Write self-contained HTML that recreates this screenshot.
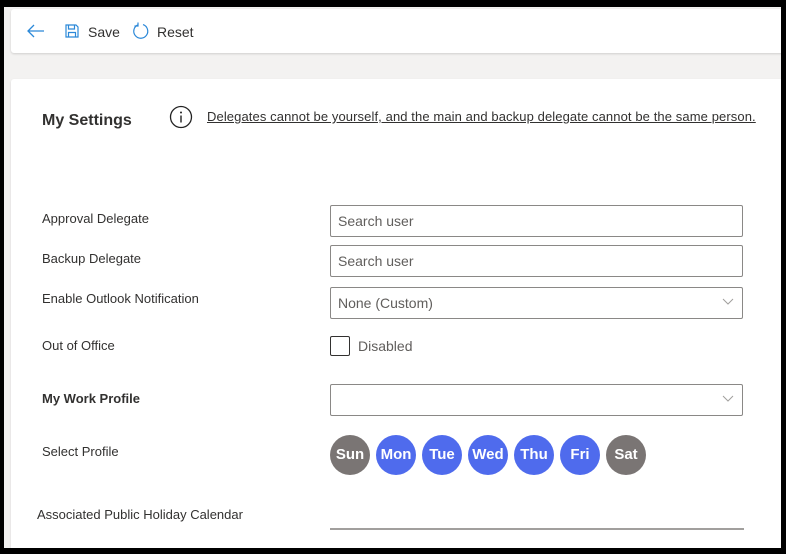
<!DOCTYPE html>
<html><head><style>
*{box-sizing:border-box;margin:0;padding:0}
body{width:786px;height:554px;background:#000;font-family:"Liberation Sans",sans-serif;color:#323130;position:relative;overflow:hidden}
.page{position:absolute;left:4px;top:7px;width:777px;height:541px;background:#f3f2f1;overflow:hidden}
.bar{position:absolute;left:7px;top:2px;width:775px;height:44px;background:#fff;border-radius:3px;box-shadow:0 1px 2px rgba(0,0,0,.15)}
.card{position:absolute;left:7px;top:72px;width:775px;height:480px;background:#fff;border-radius:3px;box-shadow:0 1px 2px rgba(0,0,0,.12)}
.a{position:absolute;font-size:13px;white-space:nowrap}
.in{position:absolute;left:319px;width:413px;height:32px;border:1px solid #8a8886;border-radius:2px;font-size:14px;color:#605e5c;padding:7px 7px}
.chev{position:absolute;right:8px;top:10px}
.d{position:absolute;top:356px;width:40px;height:40px;border-radius:50%;color:#fff;font-weight:bold;font-size:15px;text-align:center;line-height:40px}
.g{background:#7a7574}.b{background:#4f6bed}
</style></head><body>
<div class="page">
 <div class="bar">
  <svg style="position:absolute;left:16px;top:15px" width="18" height="14" viewBox="0 0 18 14"><path d="M17 7H2M7 1L1 7l6 6" fill="none" stroke="#2b88d8" stroke-width="1.3"/></svg>
  <svg style="position:absolute;left:54px;top:15px" width="14" height="14" viewBox="0 0 14 14"><path d="M1 1h10l2 2v10H1z M3.5 1v4h6V1 M3.5 13V8.5h7V13" fill="none" stroke="#2b88d8" stroke-width="1.2"/></svg>
  <div class="a" style="left:77px;top:15px;font-size:14px">Save</div>
  <svg style="position:absolute;left:121px;top:13px" width="18" height="18" viewBox="0 0 18 18"><path d="M11 2.6A7 7 0 1 1 6 2.8M6 0.5v3.5H2.5" fill="none" stroke="#2b88d8" stroke-width="1.2"/></svg>
  <div class="a" style="left:146px;top:15px;font-size:14px">Reset</div>
 </div>
 <div class="card">
  <div class="a" style="left:31px;top:33px;font-size:16px;font-weight:bold">My Settings</div>
  <svg style="position:absolute;left:158px;top:26px" width="24" height="24" viewBox="0 0 24 24"><circle cx="12" cy="12" r="10.5" fill="none" stroke="#222" stroke-width="1.3"/><circle cx="12" cy="7.5" r="1" fill="#222"/><path d="M12 10.5v7" stroke="#222" stroke-width="1.4"/></svg>
  <div class="a" style="left:196px;top:30px;text-decoration:underline;letter-spacing:0.1px">Delegates cannot be yourself, and the main and backup delegate cannot be the same person.</div>
  <div class="a" style="left:31px;top:132px">Approval Delegate</div>
  <div class="in" style="top:126px">Search user</div>
  <div class="a" style="left:31px;top:172px">Backup Delegate</div>
  <div class="in" style="top:166px">Search user</div>
  <div class="a" style="left:31px;top:212px">Enable Outlook Notification</div>
  <div class="in" style="top:208px">None (Custom)<svg class="chev" width="12" height="8" viewBox="0 0 12 8"><path d="M1 1l5 5 5-5" fill="none" stroke="#a19f9d"/></svg></div>
  <div class="a" style="left:31px;top:259px">Out of Office</div>
  <div style="position:absolute;left:319px;top:257px;width:20px;height:20px;border:1px solid #323130;border-radius:2px"></div>
  <div class="a" style="left:347px;top:259px;font-size:14px;color:#605e5c">Disabled</div>
  <div class="a" style="left:31px;top:312px;font-weight:bold">My Work Profile</div>
  <div class="in" style="top:305px"><svg class="chev" width="12" height="8" viewBox="0 0 12 8"><path d="M1 1l5 5 5-5" fill="none" stroke="#a19f9d"/></svg></div>
  <div class="a" style="left:31px;top:365px">Select Profile</div>
  <div class="d g" style="left:319px">Sun</div>
  <div class="d b" style="left:365px">Mon</div>
  <div class="d b" style="left:411px">Tue</div>
  <div class="d b" style="left:457px">Wed</div>
  <div class="d b" style="left:503px">Thu</div>
  <div class="d b" style="left:549px">Fri</div>
  <div class="d g" style="left:595px">Sat</div>
  <div class="a" style="left:26px;top:428px">Associated Public Holiday Calendar</div>
  <div style="position:absolute;left:319px;top:449px;width:414px;height:2px;background:#a19f9d"></div>
 </div>
</div>
</body></html>
